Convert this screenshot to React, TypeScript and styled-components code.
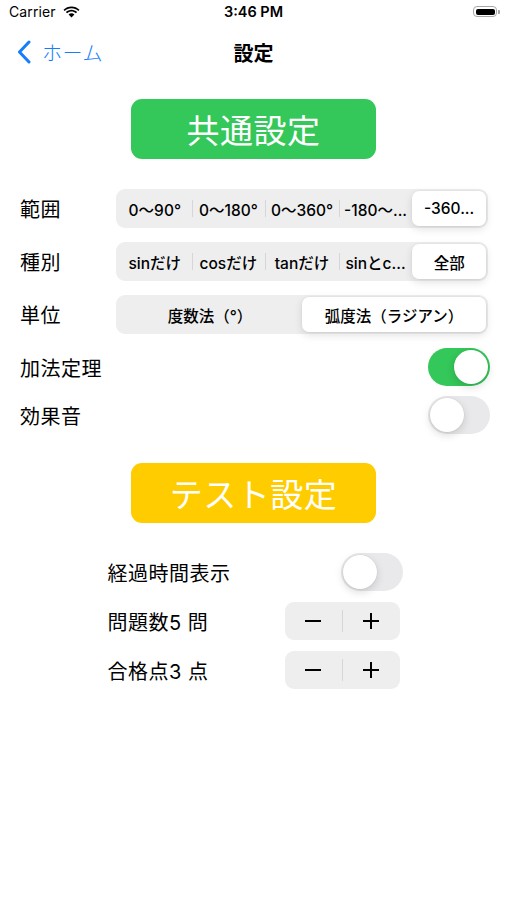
import styled, { createGlobalStyle } from 'styled-components'

const GlobalStyle = createGlobalStyle`
  html, body {
    margin: 0;
    padding: 0;
    background: #ffffff;
  }
  body {
    font-family: Inter, 'Noto Sans CJK JP', sans-serif;
    color: #000000;
  }
`

const rangeOptions = ['0〜90°', '0〜180°', '0〜360°', '-180〜...', '-360...']
const kindOptions = ['sinだけ', 'cosだけ', 'tanだけ', 'sinとc...', '全部']
const unitOptions = ['度数法（°）', '弧度法（ラジアン）']

interface SegmentedProps {
  options: string[]
  selected: number
}

function Segmented({ options, selected }: SegmentedProps): JSX.Element {
  return (
    <SegmentTrack>
      {options.map((label, i) => (
        <SegmentItem
          key={label}
          active={i === selected}
          divider={i > 0 && i !== selected && i - 1 !== selected}
        >
          {label}
        </SegmentItem>
      ))}
    </SegmentTrack>
  )
}

function Toggle({ on }: { on: boolean }): JSX.Element {
  return (
    <ToggleTrack on={on}>
      <ToggleKnob />
    </ToggleTrack>
  )
}

function Stepper(): JSX.Element {
  return (
    <StepperBox>
      <StepperButton>
        <svg width="22" height="22" viewBox="0 0 22 22">
          <path d="M3 11h16" stroke="#000" strokeWidth="2" />
        </svg>
      </StepperButton>
      <StepperDivider />
      <StepperButton>
        <svg width="22" height="22" viewBox="0 0 22 22">
          <path d="M3 11h16M11 3v16" stroke="#000" strokeWidth="2" />
        </svg>
      </StepperButton>
    </StepperBox>
  )
}

function App(): JSX.Element {
  return (
    <Screen>
      <GlobalStyle />
      <StatusBar>
        <Carrier>
          Carrier
          <svg width="17" height="12" viewBox="0 0 17 12">
            <path
              d="M8.5 2.2c2.6 0 5 1 6.8 2.7l1.2-1.2C14.4 1.6 11.6.4 8.5.4S2.6 1.6.5 3.7l1.2 1.2C3.5 3.2 5.9 2.2 8.5 2.2z"
              fill="#000"
            />
            <path
              d="M8.5 5.6c1.7 0 3.2.6 4.4 1.7l1.2-1.2C12.6 4.7 10.6 3.8 8.5 3.8S4.4 4.7 2.9 6.1l1.2 1.2c1.2-1.1 2.7-1.7 4.4-1.7z"
              fill="#000"
            />
            <path d="M8.5 7.3c-1.1 0-2.1.4-2.9 1.1l2.9 3.2 2.9-3.2c-.8-.7-1.8-1.1-2.9-1.1z" fill="#000" />
          </svg>
        </Carrier>
        <Clock>3:46 PM</Clock>
        <Battery>
          <BatteryBody>
            <BatteryFill />
          </BatteryBody>
          <BatteryTip />
        </Battery>
      </StatusBar>

      <NavBar>
        <BackButton>
          <svg width="14" height="24" viewBox="0 0 14 24">
            <path
              d="M12 2L2.5 12 12 22"
              stroke="#147EFB"
              strokeWidth="3"
              fill="none"
              strokeLinecap="round"
              strokeLinejoin="round"
            />
          </svg>
          ホーム
        </BackButton>
        <NavTitle>設定</NavTitle>
      </NavBar>

      <Content>
        <HeaderButton color="#34C759">共通設定</HeaderButton>

        <SettingsList>
          <SegmentRow>
            <RowLabel>範囲</RowLabel>
            <Segmented options={rangeOptions} selected={4} />
          </SegmentRow>
          <SegmentRow>
            <RowLabel>種別</RowLabel>
            <Segmented options={kindOptions} selected={4} />
          </SegmentRow>
          <SegmentRow>
            <RowLabel>単位</RowLabel>
            <Segmented options={unitOptions} selected={1} />
          </SegmentRow>
          <ToggleRow first>
            <RowLabel>加法定理</RowLabel>
            <Toggle on />
          </ToggleRow>
          <ToggleRow>
            <RowLabel>効果音</RowLabel>
            <Toggle on={false} />
          </ToggleRow>
        </SettingsList>

        <HeaderButton color="#FFCC00">テスト設定</HeaderButton>

        <TestList>
          <TestRow>
            <RowLabel>経過時間表示</RowLabel>
            <Toggle on={false} />
          </TestRow>
          <TestRow>
            <RowLabel>問題数5 問</RowLabel>
            <Stepper />
          </TestRow>
          <TestRow>
            <RowLabel>合格点3 点</RowLabel>
            <Stepper />
          </TestRow>
        </TestList>
      </Content>
    </Screen>
  )
}

export default App

const Screen = styled.div`
  width: 507px;
  height: 900px;
  background: #ffffff;
  overflow: hidden;
`

const StatusBar = styled.div`
  height: 25px;
  display: flex;
  align-items: center;
  justify-content: space-between;
  padding: 0 7px 0 9px;
  position: relative;
`

const Carrier = styled.div`
  display: flex;
  align-items: center;
  gap: 7px;
  font-family: Inter, 'Liberation Sans', sans-serif;
  font-size: 14px;
  letter-spacing: 0.1px;
  padding-bottom: 2px;
`

const Clock = styled.div`
  position: absolute;
  left: 0;
  right: 0;
  text-align: center;
  font-family: Inter, 'Liberation Sans', sans-serif;
  font-size: 14.5px;
  font-weight: 600;
  padding-bottom: 2px;
`

const Battery = styled.div`
  display: flex;
  align-items: center;
  gap: 1px;
  margin-bottom: 2px;
`

const BatteryBody = styled.div`
  width: 24px;
  height: 11px;
  border: 1.5px solid #a7a7a7;
  border-radius: 4px;
  padding: 1.5px;
  box-sizing: border-box;
  display: flex;
`

const BatteryFill = styled.div`
  flex: 1;
  background: #000000;
  border-radius: 2px;
`

const BatteryTip = styled.div`
  width: 2px;
  height: 4px;
  background: #a7a7a7;
  border-radius: 0 1px 1px 0;
`

const NavBar = styled.div`
  height: 54px;
  display: flex;
  align-items: center;
  position: relative;
  padding-left: 17px;
`

const BackButton = styled.div`
  display: flex;
  align-items: center;
  gap: 11px;
  color: #147efb;
  font-size: 20px;
  font-weight: 300;
  letter-spacing: 0.5px;
`

const NavTitle = styled.div`
  position: absolute;
  left: 0;
  right: 0;
  text-align: center;
  font-size: 20px;
  font-weight: 600;
  pointer-events: none;
`

const Content = styled.div`
  display: flex;
  flex-direction: column;
  padding-top: 20px;
`

const HeaderButton = styled.div<{ color: string }>`
  align-self: center;
  width: 245px;
  height: 60px;
  border-radius: 11px;
  background: ${({ color }) => color};
  color: #ffffff;
  display: flex;
  align-items: center;
  justify-content: center;
  font-size: 33px;
  font-weight: 400;
  letter-spacing: 0.5px;
`

const SettingsList = styled.div`
  display: flex;
  flex-direction: column;
  padding: 30px 17px 29px 20px;
`

const SegmentRow = styled.div`
  display: flex;
  align-items: center;
  height: 39px;
  margin-bottom: 14px;
`

const RowLabel = styled.div`
  font-size: 20px;
  font-weight: 400;
  letter-spacing: 0.5px;
  width: 96px;
  white-space: nowrap;
`

const SegmentTrack = styled.div`
  flex: 1;
  margin-right: 2px;
  height: 39px;
  display: flex;
  align-items: stretch;
  background: #eeeeef;
  border-radius: 9px;
  padding: 2px;
  box-sizing: border-box;
`

const SegmentItem = styled.div<{ active: boolean; divider: boolean }>`
  flex: 1;
  display: flex;
  align-items: center;
  justify-content: center;
  font-size: 15.5px;
  font-weight: 500;
  white-space: nowrap;
  overflow: hidden;
  position: relative;
  border-radius: 7px;
  background: ${({ active }) => (active ? '#ffffff' : 'transparent')};
  box-shadow: ${({ active }) =>
    active ? '0 3px 8px rgba(0, 0, 0, 0.12), 0 0 0 0.5px rgba(0, 0, 0, 0.04)' : 'none'};

  &::before {
    content: '';
    display: ${({ divider }) => (divider ? 'block' : 'none')};
    position: absolute;
    left: 0;
    top: 9px;
    bottom: 9px;
    width: 1px;
    background: #d5d5da;
  }
`

const ToggleRow = styled.div<{ first?: boolean }>`
  display: flex;
  align-items: center;
  justify-content: space-between;
  height: 38px;
  margin-top: ${({ first }) => (first ? '0' : '10px')};
`

const ToggleTrack = styled.div<{ on: boolean }>`
  width: 62px;
  height: 38px;
  border-radius: 19px;
  background: ${({ on }) => (on ? '#34C759' : '#e9e9eb')};
  padding: 2px;
  box-sizing: border-box;
  display: flex;
  justify-content: ${({ on }) => (on ? 'flex-end' : 'flex-start')};
`

const ToggleKnob = styled.div`
  width: 34px;
  height: 34px;
  border-radius: 50%;
  background: #ffffff;
  box-shadow: 0 3px 8px rgba(0, 0, 0, 0.15), 0 0 0 0.5px rgba(0, 0, 0, 0.06);
`

const TestList = styled.div`
  align-self: center;
  width: 295px;
  margin-left: 3px;
  padding-top: 30px;
  display: flex;
  flex-direction: column;
  gap: 11px;
`

const TestRow = styled.div`
  display: flex;
  align-items: center;
  justify-content: space-between;
  height: 38px;
`

const StepperBox = styled.div`
  width: 115px;
  height: 38px;
  margin-right: 3px;
  border-radius: 9px;
  background: #eeeeef;
  display: flex;
  align-items: center;
`

const StepperButton = styled.div`
  flex: 1;
  display: flex;
  align-items: center;
  justify-content: center;
`

const StepperDivider = styled.div`
  width: 1px;
  height: 22px;
  background: #d5d5da;
`
